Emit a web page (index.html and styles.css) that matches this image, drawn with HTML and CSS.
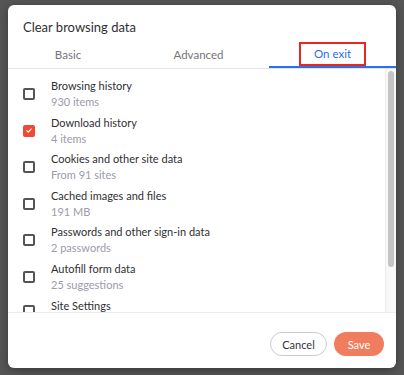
FILE: index.html
```html
<!DOCTYPE html>
<html lang="en">
<head>
  <meta charset="UTF-8">
  <title>Clear browsing data</title>
  <link rel="stylesheet" href="styles.css">
</head>
<body>
  <div class="backdrop">
    <div class="dialog">
      <h2 class="title">Clear browsing data</h2>
      <div class="tabs">
        <div class="tab">Basic</div>
        <div class="tab">Advanced</div>
        <div class="tab active"><span class="tab-label">On exit</span></div>
      </div>

      <div class="list-wrap">
        <ul class="list">
          <li class="item">
            <span class="check"></span>
            <div class="item-text"><div class="item-title">Browsing history</div><div class="item-sub">930 items</div></div>
          </li>
          <li class="item">
            <span class="check checked">
              <svg viewBox="0 0 12 12" width="12" height="12"><path d="M2.6 6.2l2.3 2.3 4.5-4.8" fill="none" stroke="#fff" stroke-width="1.7" stroke-linecap="round" stroke-linejoin="round"/></svg>
            </span>
            <div class="item-text"><div class="item-title">Download history</div><div class="item-sub">4 items</div></div>
          </li>
          <li class="item">
            <span class="check"></span>
            <div class="item-text"><div class="item-title">Cookies and other site data</div><div class="item-sub">From 91 sites</div></div>
          </li>
          <li class="item">
            <span class="check"></span>
            <div class="item-text"><div class="item-title">Cached images and files</div><div class="item-sub">191 MB</div></div>
          </li>
          <li class="item">
            <span class="check"></span>
            <div class="item-text"><div class="item-title">Passwords and other sign-in data</div><div class="item-sub">2 passwords</div></div>
          </li>
          <li class="item">
            <span class="check"></span>
            <div class="item-text"><div class="item-title">Autofill form data</div><div class="item-sub">25 suggestions</div></div>
          </li>
          <li class="item">
            <span class="check"></span>
            <div class="item-text"><div class="item-title">Site Settings</div></div>
          </li>
        </ul>
        <div class="scrollbar"><div class="thumb"></div></div>
      </div>

      <div class="footer">
        <button class="btn btn-cancel">Cancel</button>
        <button class="btn btn-save">Save</button>
      </div>
    </div>
  </div>
</body>
</html>
```

FILE: styles.css
```css
/* Reset */
* {
  margin: 0;
  padding: 0;
  box-sizing: border-box;
}

body {
  font-family: 'Lato', 'Open Sans', sans-serif;
  background: #555555;
  width: 404px;
  height: 375px;
  overflow: hidden;
}

.backdrop {
  padding: 5px 8px 0 8px;
}

/* Dialog */
.dialog {
  width: 388px;
  height: 363px;
  background: #fff;
  border-radius: 6px;
  box-shadow: 0 2px 8px rgba(0,0,0,0.35);
  display: flex;
  flex-direction: column;
  overflow: hidden;
}

.title {
  font-size: 13px;
  font-weight: 400;
  color: #2f2f33;
  line-height: 16px;
  padding: 14px 15px 0;
  height: 35px;
}

/* Tabs */
.tabs {
  display: grid;
  grid-template-columns: 120px 141px 1fr;
  height: 29px;
  border-bottom: 1px solid #e4e4e8;
}

.tab {
  display: flex;
  align-items: center;
  justify-content: center;
  font-size: 11.5px;
  color: #75757c;
  height: 28px;
}

.tab.active {
  color: #2a6ff0;
  border-bottom: 2px solid #2a6ff0;
  height: 28px;
}

.tab-label {
  display: inline-block;
  border: 2px solid #e5291d;
  padding: 3px 13px;
  line-height: 14px;
  margin-top: 1px;
}

/* List */
.list-wrap {
  display: flex;
  height: 244px;
  border-bottom: 1px solid #ececef;
  overflow: hidden;
}

.list {
  list-style: none;
  flex: 1;
  padding-top: 9px;
}

.item {
  display: flex;
  align-items: center;
  height: 36.5px;
  padding-left: 15px;
}

.item:last-child {
  align-items: flex-start;
  padding-top: 1px;
}

.item:last-child .check {
  margin-top: 7px;
}

.item .check {
  width: 12px;
  height: 12px;
  border: 2px solid #555559;
  border-radius: 2px;
  margin-right: 16px;
  margin-top: -4px;
  flex-shrink: 0;
  display: flex;
  align-items: center;
  justify-content: center;
}

.item .check.checked {
  background: #ee4b35;
  border-color: #ee4b35;
}

.item .check svg {
  width: 11px;
  height: 11px;
}

.item-text {
  line-height: 16px;
  margin-top: -4px;
}

.item:last-child .item-text {
  margin-top: 0;
}

.item-title {
  font-size: 11px;
  color: #2f2f33;
}

.item-sub {
  font-size: 11px;
  color: #9d9aab;
}

.scrollbar {
  width: 11px;
  background: #f8f8f8;
  border-left: 1px solid #ececec;
  padding: 2px 2px 0 2px;
}

.thumb {
  width: 6px;
  height: 196px;
  background: #c4c4c4;
  border-radius: 3px;
}

/* Footer */
.footer {
  display: flex;
  justify-content: flex-end;
  gap: 7px;
  padding: 19px 12px 0 0;
}

.btn {
  font-family: 'Lato', 'Open Sans', sans-serif;
  font-size: 11px;
  height: 24px;
  border-radius: 12px;
  cursor: pointer;
}

.btn-cancel {
  width: 57px;
  background: #fff;
  border: 1px solid #c9c9d3;
  color: #333338;
}

.btn-save {
  width: 50px;
  background: #f07d5e;
  border: none;
  color: #fff;
}
```
